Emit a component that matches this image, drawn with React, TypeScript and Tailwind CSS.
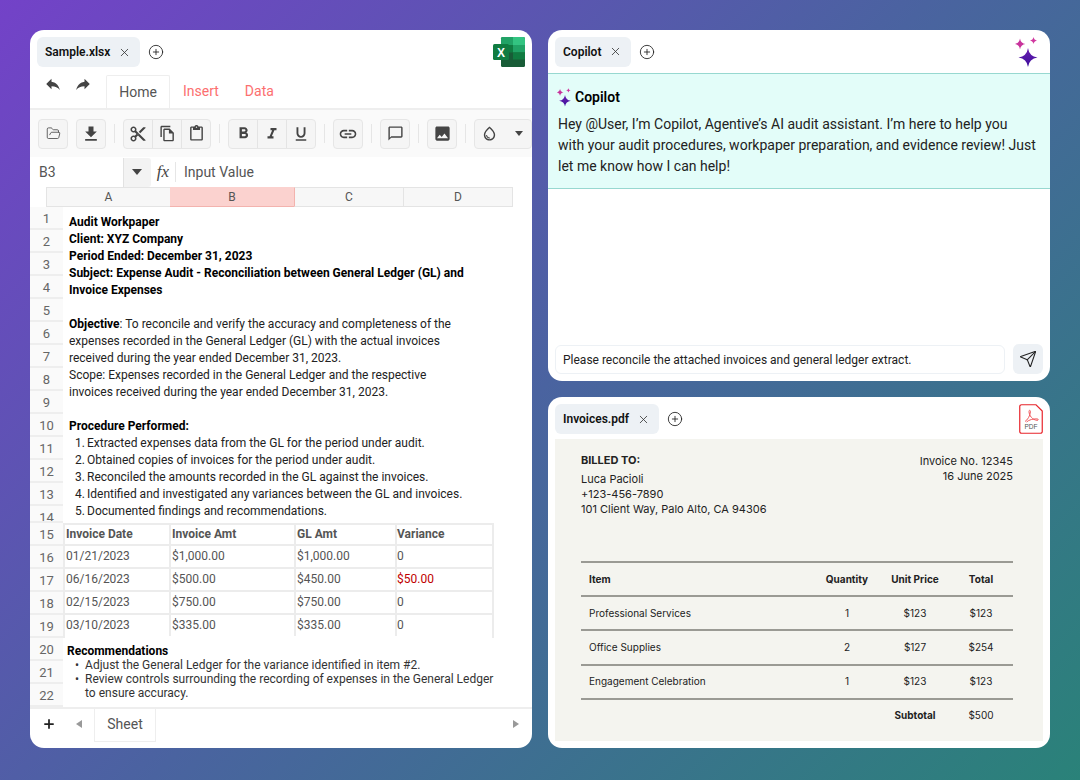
import type { ReactNode } from 'react'
import { CirclePlus, X, Send, Plus, FolderOpen } from 'lucide-react'
import {
  MdFileDownload,
  MdContentCut,
  MdOutlineFileCopy,
  MdOutlineContentPaste,
  MdFormatBold,
  MdFormatItalic,
  MdFormatUnderlined,
  MdLink,
  MdOutlineChatBubbleOutline,
  MdImage,
  MdOutlineWaterDrop,
} from 'react-icons/md'

const Sparkles = ({ className, id }: { className: string; id: string }) => (
  <svg viewBox="0 0 26 32" className={className}>
    <defs>
      <linearGradient id={id} x1="0" y1="0" x2="0" y2="1">
        <stop offset="0" stopColor="#6a1fb0" />
        <stop offset="1" stopColor="#3d0f9c" />
      </linearGradient>
    </defs>
    <path d="M5 1.500Q5.700 6.300 10.500 7 5.700 7.700 5 12.500 4.300 7.700-.5 7 4.300 6.300 5 1.500Z" fill="#c8339c" />
    <path d="M18.500 0Q19 3 22 3.500 19 4 18.500 7 18 4 15 3.500 18 3 18.500 0Z" fill="#d0389f" />
    <path d="M13 11Q14.200 19.300 22.500 20.500 14.200 21.700 13 30 11.800 21.700 3.500 20.500 11.800 19.300 13 11Z" fill={`url(#${id})`} />
  </svg>
)

const ExcelLogo = () => (
  <svg viewBox="0 0 32 30" className="h-[30px] w-8 shrink-0">
    <rect x="8" y="0" width="24" height="30" rx="1.500" fill="#185c37" />
    <path d="M20 0h10.500A1.500 1.500 0 0 1 32 1.500V8H20Z" fill="#33c481" />
    <path d="M9.500 0H20v8H8V1.500A1.500 1.500 0 0 1 9.500 0Z" fill="#21a366" />
    <rect x="8" y="8" width="12" height="7.500" fill="#107c41" />
    <rect x="20" y="8" width="12" height="7.500" fill="#21a366" />
    <rect x="20" y="15.500" width="12" height="7" fill="#107c41" />
    <rect x="0" y="7" width="16" height="16" rx="1.500" fill="#107c41" />
    <text x="8" y="19.500" textAnchor="middle" fontSize="12" fontWeight="700" fill="#fff" fontFamily="Liberation Sans, sans-serif">X</text>
  </svg>
)

const PdfIcon = () => (
  <div className="relative h-[30px] w-6 shrink-0">
    <svg viewBox="0 0 24 30" className="absolute inset-0 h-[30px] w-6" fill="none">
      <path d="M2.500 .75H17L23.250 7V27.500a1.750 1.750 0 0 1-1.750 1.750H2.500A1.750 1.750 0 0 1 .75 27.500V2.500A1.750 1.750 0 0 1 2.500.75Z" stroke="#e8242b" strokeWidth="1.200" />
      <path d="M6 17.500c2.500-1.500 5-5.500 5.400-9.500.2-2-1.400-2.400-1.400-.5 0 4 3.500 8.500 8 8.800 1.800.1 1.800-1.300 0-1.400-3.500-.2-8 .8-10.500 3.100" stroke="#f05a5f" strokeWidth="1" />
    </svg>
    <span className="absolute left-0 right-0 top-[19px] text-center font-['Liberation_Sans',sans-serif] text-[6.500px] leading-[8px] text-[#555]">PDF</span>
  </div>
)

const Tab = ({ label }: { label: string }) => (
  <div className="flex items-center gap-[7.500px]">
    <div className="flex h-[30px] items-center gap-[8px] rounded-[6px] bg-[#edf1f5] pl-[8px] pr-[9px] font-['Roboto',sans-serif] text-[12px] font-semibold text-[#111]">
      <span>{label}</span>
      <X className="h-[13px] w-[13px] text-[#333]" strokeWidth={1.5} />
    </div>
    <CirclePlus className="h-4 w-4 text-[#222]" strokeWidth={1.3} />
  </div>
)

const ToolBtn = ({ children }: { children: ReactNode }) => (
  <div className="flex h-full flex-1 items-center justify-center border-r border-[#e4e4e4] text-[#444] last:border-r-0">{children}</div>
)

const ToolGroup = ({ children, w = 'w-[30px]' }: { children: ReactNode; w?: string }) => (
  <div className={`flex h-[30px] shrink-0 rounded-[4px] border border-[#e6e6e6] bg-[#f5f5f5] ${w}`}>{children}</div>
)

const Sep = () => <div className="mx-[8px] h-[19px] w-px shrink-0 bg-[#e6e6e6]" />

const rowNums = Array.from({ length: 22 }, (_, i) => i + 1)

const steps = [
  'Extracted expenses data from the GL for the period under audit.',
  'Obtained copies of invoices for the period under audit.',
  'Reconciled the amounts recorded in the GL against the invoices.',
  'Identified and investigated any variances between the GL and invoices.',
  'Documented findings and recommendations.',
]

const invoices = [
  ['Invoice Date', 'Invoice Amt', 'GL Amt', 'Variance'],
  ['01/21/2023', '$1,000.00', '$1,000.00', '0'],
  ['06/16/2023', '$500.00', '$450.00', '$50.00'],
  ['02/15/2023', '$750.00', '$750.00', '0'],
  ['03/10/2023', '$335.00', '$335.00', '0'],
]

const pdfRows = [
  ['Professional Services', '1', '$123', '$123'],
  ['Office Supplies', '2', '$127', '$254'],
  ['Engagement Celebration', '1', '$123', '$123'],
]

const SheetPanel = () => (
  <div className="flex h-[718px] w-[502px] flex-col overflow-hidden rounded-[14px] bg-white font-['Roboto',sans-serif]">
    <div className="flex items-center justify-between px-[7px] pt-[7px]">
      <Tab label="Sample.xlsx" />
      <ExcelLogo />
    </div>
    {/* ribbon tabs */}
    <div className="flex h-[41px] shrink-0 items-end">
      <div className="mb-[7px] flex w-[76px] gap-[12px] self-center pl-[14px] text-[#444]">
        <svg viewBox="0 0 24 24" className="h-[18px] w-[18px]" fill="currentColor"><path d="M10 9V5l-7 7 7 7v-4.100c5 0 8.500 1.600 11 5.100-1-5-4-10-11-11z" /></svg>
        <svg viewBox="0 0 24 24" className="h-[18px] w-[18px] -scale-x-100" fill="currentColor"><path d="M10 9V5l-7 7 7 7v-4.100c5 0 8.500 1.600 11 5.100-1-5-4-10-11-11z" /></svg>
      </div>
      <div className="flex h-[33px] w-[64px] items-center justify-center rounded-t-[2px] border border-b-0 border-[#eee] text-[14px] text-[#555]">Home</div>
      <div className="ml-[13px] flex h-[33px] items-center text-[14px] text-[#fc6f6f]">Insert</div>
      <div className="ml-[26px] flex h-[33px] items-center text-[14px] text-[#fc6f6f]">Data</div>
    </div>
    {/* toolbar */}
    <div className="flex h-[49px] shrink-0 items-center border-t-2 border-[#eeeeee] bg-[#fafafa] pl-[8px]">
      <ToolGroup><ToolBtn><FolderOpen size={15} strokeWidth={1.3} /></ToolBtn></ToolGroup>
      <div className="w-[8px] shrink-0" />
      <ToolGroup><ToolBtn><MdFileDownload size={20} /></ToolBtn></ToolGroup>
      <Sep />
      <ToolGroup w="w-[88px]">
        <ToolBtn><MdContentCut size={18} /></ToolBtn>
        <ToolBtn><MdOutlineFileCopy size={17} /></ToolBtn>
        <ToolBtn><MdOutlineContentPaste size={17} /></ToolBtn>
      </ToolGroup>
      <Sep />
      <ToolGroup w="w-[88px]">
        <ToolBtn><MdFormatBold size={19} /></ToolBtn>
        <ToolBtn><MdFormatItalic size={18} /></ToolBtn>
        <ToolBtn><MdFormatUnderlined size={18} /></ToolBtn>
      </ToolGroup>
      <Sep />
      <ToolGroup><ToolBtn><MdLink size={20} /></ToolBtn></ToolGroup>
      <Sep />
      <ToolGroup><ToolBtn><MdOutlineChatBubbleOutline size={17} /></ToolBtn></ToolGroup>
      <Sep />
      <ToolGroup><ToolBtn><MdImage size={19} /></ToolBtn></ToolGroup>
      <Sep />
      <ToolGroup w="w-[58px]">
        <div className="flex h-full w-full items-center gap-[17px] pl-[6px] text-[#444]">
          <MdOutlineWaterDrop size={17} />
          <span className="h-0 w-0 border-x-[4px] border-t-[5px] border-x-transparent border-t-[#444]" />
        </div>
      </ToolGroup>
    </div>
    {/* formula bar */}
    <div className="flex h-[30px] shrink-0 items-center bg-white text-[14px] text-[#555]">
      <div className="flex h-[29px] w-[93px] items-center rounded-l-[3px] bg-white pl-[9px]">B3</div>
      <div className="flex h-[29px] w-[28px] items-center justify-center rounded-r-[3px] border-l border-[#e2e2e2] bg-[#f3f3f3]">
        <span className="mr-[1px] h-0 w-0 border-x-[5px] border-t-[6px] border-x-transparent border-t-[#444]" />
      </div>
      <div className="flex w-[24px] justify-center font-['Liberation_Serif',serif] text-[17px] italic text-[#444]">fx</div>
      <div className="flex h-[20px] items-center border-l border-[#e6e6e6] pl-[8px]">Input Value</div>
    </div>
    {/* column headers */}
    <div className="flex h-[20px] shrink-0 pl-[16px] text-[12px] text-[#555]">
      <div className="flex w-[124px] items-center justify-center border border-r-0 border-[#e4e4e4] bg-[#f7f7f7]">A</div>
      <div className="flex w-[124px] items-center justify-center border-b border-[#f3b3ae] bg-[#fbd2cf]">B</div>
      <div className="flex w-[110px] items-center justify-center border border-[#e4e4e4] border-l-[#f3b3ae] bg-[#f7f7f7]">C</div>
      <div className="flex w-[109px] items-center justify-center border border-l-0 border-[#e4e4e4] bg-[#f7f7f7]">D</div>
    </div>
    {/* sheet body */}
    <div className="flex min-h-0 flex-1 overflow-hidden">
      <div className="w-[33px] shrink-0 bg-[#fafafa] text-center text-[13px] text-[#666]">
        {rowNums.map((n) => (
          <div key={n} className={`overflow-hidden border-b-2 border-[#eeeeee] ${n === 14 ? 'h-[17px]' : 'h-[23px]'}`}>
            <div className="flex h-[23px] items-center justify-center">{n}</div>
          </div>
        ))}
      </div>
      <div className="min-w-0 flex-1 text-[12px] leading-[17px] text-[#333]">
        <div className="h-[316px] overflow-hidden pl-[6px] pt-[7px] text-[#222]">
          <p className="font-bold text-black">Audit Workpaper</p>
          <p className="font-bold text-black">Client: XYZ Company</p>
          <p className="font-bold text-black">Period Ended: December 31, 2023</p>
          <p className="font-bold text-black">Subject: Expense Audit - Reconciliation between General Ledger (GL) and</p>
          <p className="font-bold text-black">Invoice Expenses</p>
          <p className="mt-[17px]"><b className="text-black">Objective</b>: To reconcile and verify the accuracy and completeness of the</p>
          <p>expenses recorded in the General Ledger (GL) with the actual invoices</p>
          <p>received during the year ended December 31, 2023.</p>
          <p>Scope: Expenses recorded in the General Ledger and the respective</p>
          <p>invoices received during the year ended December 31, 2023.</p>
          <p className="mt-[17px] font-bold text-black">Procedure Performed:</p>
          <ol className="pl-[6px]">
            {steps.map((s, i) => (
              <li key={s} className="flex">
                <span className="w-[12px] shrink-0">{i + 1}.</span>
                <span>{s}</span>
              </li>
            ))}
          </ol>
        </div>
        <div className="w-[431px] border-x-2 border-[#ececec] text-[#555]">
          {invoices.map((row, i) => (
            <div key={row[0]} className={`grid h-[23px] grid-cols-[106px_125px_101px_95px] items-center border-b-2 ${i < invoices.length - 1 ? 'border-[#ececec]' : 'border-transparent'} ${i === 0 ? 'border-t-2 border-t-[#ececec] font-bold' : ''}`}>
              {row.map((cell, j) => (
                <div key={j} className={`flex h-full items-center pb-[1px] ${j < 3 ? 'border-r-2 border-[#ececec] pl-[1px]' : ''} ${cell === '$50.00' ? 'text-[#c00000]' : ''}`}>{cell}</div>
              ))}
            </div>
          ))}
        </div>
        <div className="pl-[4px] pt-[6px] leading-[14px] text-[#333]">
          <p className="font-bold text-black">Recommendations</p>
          <ul className="pl-[8px]">
            <li className="flex gap-[6px]"><span>•</span><span>Adjust the General Ledger for the variance identified in item #2.</span></li>
            <li className="flex gap-[6px]"><span>•</span><span className="w-[412px]">Review controls surrounding the recording of expenses in the General Ledger to ensure accuracy.</span></li>
          </ul>
        </div>
      </div>
    </div>
    {/* sheet tabs */}
    <div className="flex h-[41px] shrink-0 items-start border-t-2 border-[#eeeeee] text-[#555]">
      <Plus className="ml-[12px] mt-[8px] h-[14px] w-[14px] text-[#222]" strokeWidth={3} />
      <span className="ml-[20px] mt-[11px] h-0 w-0 border-y-[4px] border-r-[6px] border-y-transparent border-r-[#999]" />
      <div className="ml-[12px] flex h-[33px] w-[62px] items-center justify-center border-x border-b border-[#eeeeee] pb-[2px] text-[14px]">Sheet</div>
      <span className="ml-auto mr-[13px] mt-[11px] h-0 w-0 border-y-[4px] border-l-[6px] border-y-transparent border-l-[#999]" />
    </div>
  </div>
)

const CopilotPanel = () => (
  <div className="flex h-[351px] flex-col overflow-hidden rounded-[14px] bg-white font-['Roboto',sans-serif]">
    <div className="flex h-[44px] shrink-0 items-center justify-between border-b border-[#97d8d0] pl-[7px] pr-[9px]">
      <Tab label="Copilot" />
      <Sparkles id="spark-top" className="mt-[2px] h-[32px] w-[26px]" />
    </div>
    <div className="h-[115px] shrink-0 border-b border-[#97d8d0] bg-[#e3fdf9] pl-[10px] pt-[13px] text-[14px] leading-[21px] text-[#222]">
      <div className="mb-[6px] -ml-[1px] flex items-center gap-[2px] font-semibold text-black">
        <Sparkles id="spark-small" className="h-[20px] w-[16px]" />
        <span>Copilot</span>
      </div>
      <p className="whitespace-nowrap">
        Hey @User, I’m Copilot, Agentive’s AI audit assistant. I’m here to help you
        <br />
        with your audit procedures, workpaper preparation, and evidence review! Just
        <br />
        let me know how I can help!
      </p>
    </div>
    <div className="flex flex-1 items-end gap-[8px] px-[7px] pb-[7px]">
      <div className="flex h-[29px] flex-1 items-center rounded-[6px] border border-[#edf1f5] pl-[7px] text-[12px] text-[#222]">
        Please reconcile the attached invoices and general ledger extract.
      </div>
      <div className="flex h-[30px] w-[30px] items-center justify-center rounded-[6px] bg-[#edf1f5] text-[#222]">
        <Send size={18} strokeWidth={1.4} />
      </div>
    </div>
  </div>
)

const PdfPanel = () => (
  <div className="flex h-[351px] flex-col overflow-hidden rounded-[14px] bg-white font-['Inter',sans-serif]">
    <div className="flex h-[42px] shrink-0 items-start justify-between px-[7px] pt-[7px]">
      <Tab label="Invoices.pdf" />
      <PdfIcon />
    </div>
    <div className="mx-[7px] flex-1 bg-[#f4f4ef] pl-[26px] pr-[30px] pt-[14px] text-[11px] text-[#222]">
      <div className="flex justify-between leading-[15px]">
        <div>
          <p className="mb-[4px] font-bold">BILLED TO:</p>
          <p>Luca Pacioli</p>
          <p>+123-456-7890</p>
          <p>101 Client Way, Palo Alto, CA 94306</p>
        </div>
        <div className="pt-[1px] text-right">
          <p>Invoice No. 12345</p>
          <p>16 June 2025</p>
        </div>
      </div>
      <div className="mt-[44px] border-t-2 border-[#9a9a94] text-[10px]">
        <div className="grid h-[34px] grid-cols-[1fr_62px_74px_58px] items-center border-b-2 border-[#9a9a94] pl-[8px] pr-[3px] text-center font-bold">
          <span className="text-left">Item</span>
          <span>Quantity</span>
          <span>Unit Price</span>
          <span>Total</span>
        </div>
        {pdfRows.map((r) => (
          <div key={r[0]} className="grid h-[34.250px] grid-cols-[1fr_62px_74px_58px] items-center border-b-2 border-[#9a9a94] pl-[8px] pr-[3px] text-center">
            <span className="text-left">{r[0]}</span>
            <span>{r[1]}</span>
            <span>{r[2]}</span>
            <span>{r[3]}</span>
          </div>
        ))}
        <div className="grid h-[32px] grid-cols-[1fr_62px_74px_58px] items-center pl-[8px] pr-[3px] text-center">
          <span />
          <span />
          <span className="font-bold">Subtotal</span>
          <span>$500</span>
        </div>
      </div>
    </div>
    <div className="h-[7px] shrink-0" />
  </div>
)

export default function App() {
  return (
    <div className="flex h-[780px] w-[1080px] gap-[16px] overflow-hidden bg-[linear-gradient(135deg,#7342c8_0%,#4a63a0_50%,#2a8279_100%)] p-[30px] pb-[32px]">
      <SheetPanel />
      <div className="flex w-[502px] flex-col gap-[16px]">
        <CopilotPanel />
        <PdfPanel />
      </div>
    </div>
  )
}
